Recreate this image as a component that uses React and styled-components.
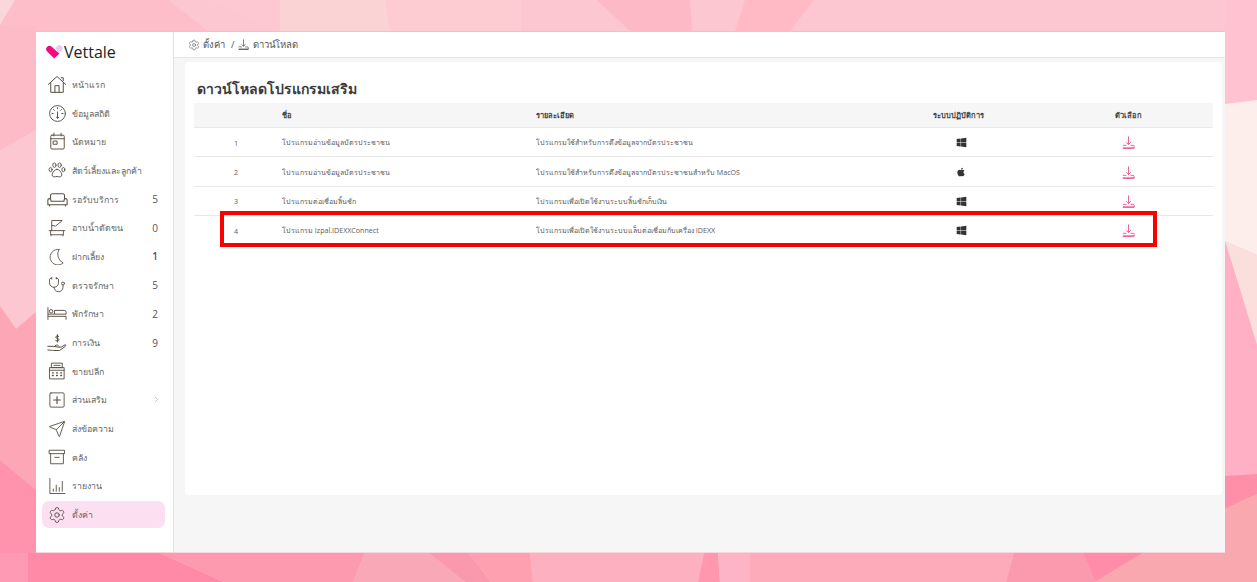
import React from 'react'
import styled, { createGlobalStyle } from 'styled-components'
import { FaWindows, FaApple } from 'react-icons/fa'
import { Stethoscope, Send, Settings, ChevronRight } from 'lucide-react'

const facets = [
  ['0,0 1257,0 1257,582 0,582', '#fdc7d1'],
  // top strip
  ['0,0 168,0 208,31 0,31', '#fdbdc9'],
  ['208,0 385,0 385,31 280,31', '#fdc8d2'],
  ['280,0 385,0 390,31 280,31', '#fad4d4'],
  ['385,0 521,0 521,31 390,31', '#fdcbd2'],
  ['597,0 690,0 692,31 630,31', '#feb9c6'],
  ['745,0 814,0 790,31 735,31', '#ffbac6'],
  ['0,0 15,0 0,25', '#fbd6da'],
  // left
  ['0,25 36,25 36,130 0,150', '#fdbac7'],
  ['0,306 16,329 36,312 36,490 0,460', '#fda6b6'],
  ['0,460 36,490 36,582 0,582', '#ff92ac'],
  // bottom strip
  ['0,553 28,553 28,582 0,582', '#ff9ab5'],
  ['28,553 160,553 224,582 28,582', '#ff8aa8'],
  ['160,553 365,553 353,582 224,582', '#fd9ab0'],
  ['365,553 429,553 465,582 353,582', '#f9a8b8'],
  ['429,553 469,553 491,582 465,582', '#fa98ae'],
  ['469,553 530,553 533,582 491,582', '#ffa0b0'],
  ['530,553 704,553 698,582 533,582', '#fcb0c0'],
  ['704,553 718,553 720,582 698,582', '#ff98ae'],
  ['718,553 750,553 750,582 720,582', '#fcb4c6'],
  ['750,553 1014,553 1006,582 750,582', '#fdaabb'],
  ['1014,553 1083,553 1095,582 1006,582', '#fb9aae'],
  ['1083,553 1143,553 1095,582', '#ff8ca8'],
  ['1143,553 1257,553 1257,582 1095,582', '#f9a8b0'],
  // right
  ['1225,0 1257,0 1257,104 1225,104', '#ffc2d0'],
  ['1225,104 1257,100 1257,255 1225,241', '#fdeeec'],
  ['1225,241 1257,255 1257,345', '#fbdfdc'],
  ['1225,241 1257,345 1257,500 1225,476', '#ffb0c4'],
  ['1225,476 1257,474 1257,494 1225,509', '#ff8fa8'],
  ['1225,509 1257,494 1257,582 1225,582', '#f9a8b0'],
]

const backdrop = `<svg xmlns="http://www.w3.org/2000/svg" width="1257" height="582">${facets
  .map(([p, c]) => `<polygon points="${p}" fill="${c}"/>`)
  .join('')}</svg>`

const GlobalStyle = createGlobalStyle`
  html, body {
    margin: 0;
    height: 100%;
    overflow: hidden;
  }
  body {
    background: url("data:image/svg+xml,${encodeURIComponent(backdrop)}") no-repeat;
    font-family: "Open Sans", "Noto Sans", "Liberation Sans", sans-serif;
    color: #4a4a4a;
  }
`

const Page = styled.div`
  padding: 31px 32px 29px 36px;
  height: 582px;
  box-sizing: border-box;
`
const Frame = styled.div`
  height: 100%;
  display: flex;
  background: #f6f6f6;
  border-top: 1px solid #cfcfcf;
  border-bottom: 1px solid #fbd5de;
  box-sizing: border-box;
`
const Sidebar = styled.aside`
  width: 138px;
  flex: none;
  box-sizing: border-box;
  background: #fff;
  border-right: 1px solid #e2e2e2;
  padding: 10px 8px 0 6px;
`
const Logo = styled.div`
  display: flex;
  align-items: center;
  gap: 1px;
  height: 20px;
  padding-left: 4px;
  margin-bottom: 8px;
  font-size: 16px;
  color: #222;
`
const Menu = styled.nav`
  display: flex;
  flex-direction: column;
`
const Item = styled.div`
  display: flex;
  align-items: center;
  height: ${p => (p.$active ? '27px' : '28.7px')};
  margin: ${p => (p.$active ? '0.85px 0' : '0')};
  border-radius: 7px;
  background: ${p => (p.$active ? '#fcdff0' : 'transparent')};
  padding: 0 7px 0 3px;
  font-size: 8.8px;
  color: #666;
`
const IconSlot = styled.span`
  width: 24px;
  flex: none;
  display: flex;
  justify-content: center;
  align-items: center;
  color: #574e42;
  svg { display: block; }
`
const Label = styled.span`
  flex: 1;
  margin-left: 3px;
  padding-top: 1px;
  white-space: nowrap;
`
const Count = styled.span`
  font-size: 10px;
  color: #555;
  font-weight: ${p => (p.$bold ? 600 : 400)};
`
const More = styled.span`
  display: flex;
  margin-right: -3px;
  color: #555;
`
const Main = styled.main`
  flex: 1;
  display: flex;
  flex-direction: column;
  min-width: 0;
`
const TopBar = styled.header`
  height: 26px;
  flex: none;
  box-sizing: border-box;
  background: #fff;
  border-bottom: 1px solid #e6e6e6;
  display: flex;
  align-items: center;
  padding-left: 14px;
  gap: 3px;
  font-size: 9.5px;
  color: #555;
  svg { display: block; }
`
const Slash = styled.span`
  margin: 0 1px 0 3px;
`
const Crumb = styled.span`
  margin-left: ${p => (p.$gap ? '1px' : '0')};
`
const Body = styled.div`
  flex: 1;
  padding: 4px 3px 57px 11px;
  min-height: 0;
  display: flex;
`
const Card = styled.section`
  flex: 1;
  background: #fff;
  border-radius: 4px;
  padding: 17px 9px 0 9px;
`
const Title = styled.h1`
  margin: 0 0 4px 3px;
  height: 20px;
  line-height: 20px;
  font-size: 14px;
  font-weight: 600;
  color: #3c3c3c;
`
const Row = styled.div`
  position: relative;
  display: grid;
  grid-template-columns: 84px 258px 332px 180px 160px;
  align-items: center;
  height: ${p => (p.$head ? '25px' : '29.4px')};
  padding-top: ${p => (p.$head ? '0' : '1px')};
  box-sizing: border-box;
  background: ${p => (p.$head ? '#f6f6f6' : '#fff')};
  border-bottom: 1px solid ${p => (p.$head ? '#eaeaea' : p.$last ? '#fff' : '#e8e8e8')};
  font-size: ${p => (p.$head ? '7.5px' : '7.1px')};
  font-weight: ${p => (p.$head ? 600 : 400)};
  color: ${p => (p.$head ? '#444' : '#5a5a5a')};
`
const Cell = styled.div`
  display: flex;
  align-items: center;
  white-space: nowrap;
  justify-content: ${p => (p.$center ? 'center' : 'flex-start')};
  padding-left: ${p => (p.$indent ? `${p.$indent}px` : '0')};
  color: ${p => p.$tone || 'inherit'};
`
const Callout = styled.div`
  position: absolute;
  left: 26px;
  top: -5px;
  width: 937px;
  height: 36px;
  box-sizing: border-box;
  border: 4px solid #fa0000;
`

const Svg = ({ size = 20, children, ...rest }) => (
  <svg width={size} height={size} viewBox="0 0 24 24" fill="none" stroke="currentColor" strokeWidth="1.2" strokeLinecap="round" strokeLinejoin="round" {...rest}>
    {children}
  </svg>
)

const HomeIcon = () => (
  <Svg size={20}>
    <path d="M1.500 12.500 12 3l10.500 9.500M4.500 10.500V22h15V10.500M9.500 22v-8h5v8M17 4.500h2.500V8" />
  </Svg>
)
const StatsIcon = () => (
  <Svg size={19}>
    <circle cx="12" cy="12" r="10" />
    <path d="M12 4.500v1.500M5 12h1.500M17.500 12H19M7 7l1 1M17 7l-1 1M12 10v7" />
    <circle cx="12" cy="17" r="1" />
  </Svg>
)
const CalendarIcon = () => (
  <Svg size={19}>
    <rect x="3.500" y="4" width="17" height="17.500" rx="1.500" />
    <path d="M3.500 8.500h17M7.500 1.500V5M16.500 1.500V5" />
    <rect x="7" y="11.500" width="4.500" height="4" />
  </Svg>
)
const PawIcon = () => (
  <Svg size={18}>
    <ellipse cx="3.500" cy="11.500" rx="2" ry="2.800" />
    <ellipse cx="8.500" cy="5.500" rx="2.200" ry="3" />
    <ellipse cx="15.500" cy="5.500" rx="2.200" ry="3" />
    <ellipse cx="20.500" cy="11.500" rx="2" ry="2.800" />
    <path d="M12 11c-3 0-6.500 4.500-6.500 7.500 0 3 3.500 3.200 6.500 2 3 1.200 6.500 1 6.500-2C18.500 15.500 15 11 12 11z" />
  </Svg>
)
const SofaIcon = () => (
  <Svg size={21}>
    <path d="M4 11V7.500a2 2 0 0 1 2-2h12a2 2 0 0 1 2 2V11M1 12.500c0-2 3.500-2 3.500 0V14h15v-1.500c0-2 3.500-2 3.500 0V18H1zM3 18v1.500M21 18v1.500" />
  </Svg>
)
const BathIcon = () => (
  <Svg size={18}>
    <path d="M1.500 15.500h21M3.500 15.500V21h17v-5.500M4 21v1.500M20 21v1.500M5 15.500V2h14l-9 7.500-5-1" />
  </Svg>
)
const MoonIcon = () => (
  <Svg size={17}>
    <path d="M14 2A11 11 0 1 0 20 21 13.500 13.500 0 0 1 14 2z" />
  </Svg>
)
const BedIcon = () => (
  <svg width="20" height="15" viewBox="0 0 32 24" fill="none" stroke="currentColor" strokeWidth="1.500">
    <path d="M1.500 2v20M1.500 16.500h29V22M1.500 13h29M30.500 13v-3a3 3 0 0 0-3-3H12v6" />
    <circle cx="6.500" cy="8.500" r="2.800" />
  </svg>
)
const MoneyIcon = () => (
  <Svg size={20}>
    <path d="M1 16h7c2 0 4 1 5.500 1H17l5-3c.8 1 .4 1.800-.5 2.500L15 21H8c-2 0-3-.6-7-.6" />
    <path d="M10 15c2-1 3-1 4.500 1" />
    <path d="M14 4c-1-.8-3.500-.6-3.500 1 0 2 4 1 4 3.200 0 1.500-2.600 1.700-4 .8M12.500 2v9" />
  </Svg>
)
const RegisterIcon = () => (
  <Svg size={18}>
    <path d="M5 1.500h14v6H5zM8 4.500h8M2.500 7.500h19V22.500h-19zM2.500 11h19" />
    <path d="M6 14.500h1M11.500 14.500h1M17 14.500h1M6 18h1M11.500 18h1M17 18h1" strokeWidth="1.800" />
  </Svg>
)
const PlusBoxIcon = () => (
  <Svg size={18}>
    <rect x="2.500" y="2.500" width="19" height="19" rx="1.500" />
    <path d="M12 7.500v9M7.500 12h9" strokeWidth="1.500" />
  </Svg>
)
const ArchiveIcon = () => (
  <Svg size={18}>
    <path d="M2 3h20v4.500H2zM3.500 7.500V21h17V7.500M9 12.500h6" />
  </Svg>
)
const ReportIcon = () => (
  <Svg size={18}>
    <path d="M2.500 2v20h20M7 19v-3M11 19v-8M15 19v-5M19 19V6" />
  </Svg>
)
const HeartLogo = () => (
  <svg width="17" height="14" viewBox="0 0 17 14">
    <path d="M9.500 3.200 11.300 1.200a3 3 0 0 1 4.400 0 3 3 0 0 1 0 4.200L12.500 8.700z" fill="#e9c9f3" />
    <path d="M8.200 13.600 1.200 6.400a3.200 3.200 0 0 1 0-4.600 3.200 3.200 0 0 1 4.500 0l7.600 6.900z" fill="#f2097f" />
  </svg>
)
const DownloadIcon = ({ size = 15, tone = '#e9528f' }) => (
  <svg width={size} height={size} viewBox="0 0 16 16" fill="none" stroke={tone} strokeWidth="1.100">
    <path d="M8 .5v10M5.200 7.800 8 10.500l2.800-2.700" />
    <path d="M1 11.500h4.500M10.500 11.500h3.200q1.300 0 1.300 1.300v2H1" />
    <path d="M1 15h14" strokeWidth="1.400" />
  </svg>
)

const menu = [
  { label: 'หน้าแรก', icon: <HomeIcon /> },
  { label: 'ข้อมูลสถิติ', icon: <StatsIcon /> },
  { label: 'นัดหมาย', icon: <CalendarIcon /> },
  { label: 'สัตว์เลี้ยงและลูกค้า', icon: <PawIcon /> },
  { label: 'รอรับบริการ', icon: <SofaIcon />, count: 5 },
  { label: 'อาบน้ำตัดขน', icon: <BathIcon />, count: 0 },
  { label: 'ฝากเลี้ยง', icon: <MoonIcon />, count: 1, bold: true },
  { label: 'ตรวจรักษา', icon: <Stethoscope size={18} strokeWidth={1.2} />, count: 5 },
  { label: 'พักรักษา', icon: <BedIcon />, count: 2 },
  { label: 'การเงิน', icon: <MoneyIcon />, count: 9 },
  { label: 'ขายปลีก', icon: <RegisterIcon /> },
  { label: 'ส่วนเสริม', icon: <PlusBoxIcon />, more: true },
  { label: 'ส่งข้อความ', icon: <Send size={18} strokeWidth={1.2} /> },
  { label: 'คลัง', icon: <ArchiveIcon /> },
  { label: 'รายงาน', icon: <ReportIcon /> },
  { label: 'ตั้งค่า', icon: <Settings size={18} strokeWidth={1.2} />, active: true },
]

const rows = [
  { name: 'โปรแกรมอ่านข้อมูลบัตรประชาชน', detail: 'โปรแกรมใช้สำหรับการดึงข้อมูลจากบัตรประชาชน', os: 'win' },
  { name: 'โปรแกรมอ่านข้อมูลบัตรประชาชน', detail: 'โปรแกรมใช้สำหรับการดึงข้อมูลจากบัตรประชาชนสำหรับ MacOS', os: 'mac' },
  { name: 'โปรแกรมต่อเชื่อมลิ้นชัก', detail: 'โปรแกรมเพื่อเปิดใช้งานระบบลิ้นชักเก็บเงิน', os: 'win' },
  { name: 'โปรแกรม Izpal.IDEXXConnect', detail: 'โปรแกรมเพื่อเปิดใช้งานระบบแล็บต่อเชื่อมกับเครื่อง IDEXX', os: 'win', marked: true },
]

const App = () => (
  <>
    <GlobalStyle />
    <Page>
      <Frame>
        <Sidebar>
          <Logo>
            <HeartLogo />
            Vettale
          </Logo>
          <Menu>
            {menu.map(m => (
              <Item key={m.label} $active={m.active}>
                <IconSlot>{m.icon}</IconSlot>
                <Label>{m.label}</Label>
                {m.count !== undefined && <Count $bold={m.bold}>{m.count}</Count>}
                {m.more && <More><ChevronRight size={9} strokeWidth={1} /></More>}
              </Item>
            ))}
          </Menu>
        </Sidebar>
        <Main>
          <TopBar>
            <Settings size={12} strokeWidth={1.2} />
            <Crumb>ตั้งค่า</Crumb>
            <Slash>/</Slash>
            <DownloadIcon size={11} tone="#555" />
            <Crumb $gap>ดาวน์โหลด</Crumb>
          </TopBar>
          <Body>
            <Card>
              <Title>ดาวน์โหลดโปรแกรมเสริม</Title>
              <Row $head>
                <Cell />
                <Cell $indent={4}>ชื่อ</Cell>
                <Cell>รายละเอียด</Cell>
                <Cell $center>ระบบปฏิบัติการ</Cell>
                <Cell $center>ตัวเลือก</Cell>
              </Row>
              {rows.map((r, i) => (
                <Row key={i} $last={i === rows.length - 1}>
                  <Cell $center>{i + 1}</Cell>
                  <Cell $indent={4}>{r.name}</Cell>
                  <Cell>{r.detail}</Cell>
                  <Cell $center $indent={6} $tone="#333">{r.os === 'win' ? <FaWindows size={11} /> : <FaApple size={10} />}</Cell>
                  <Cell $center><DownloadIcon size={13} /></Cell>
                  {r.marked && <Callout />}
                </Row>
              ))}
            </Card>
          </Body>
        </Main>
      </Frame>
    </Page>
  </>
)

export default App
